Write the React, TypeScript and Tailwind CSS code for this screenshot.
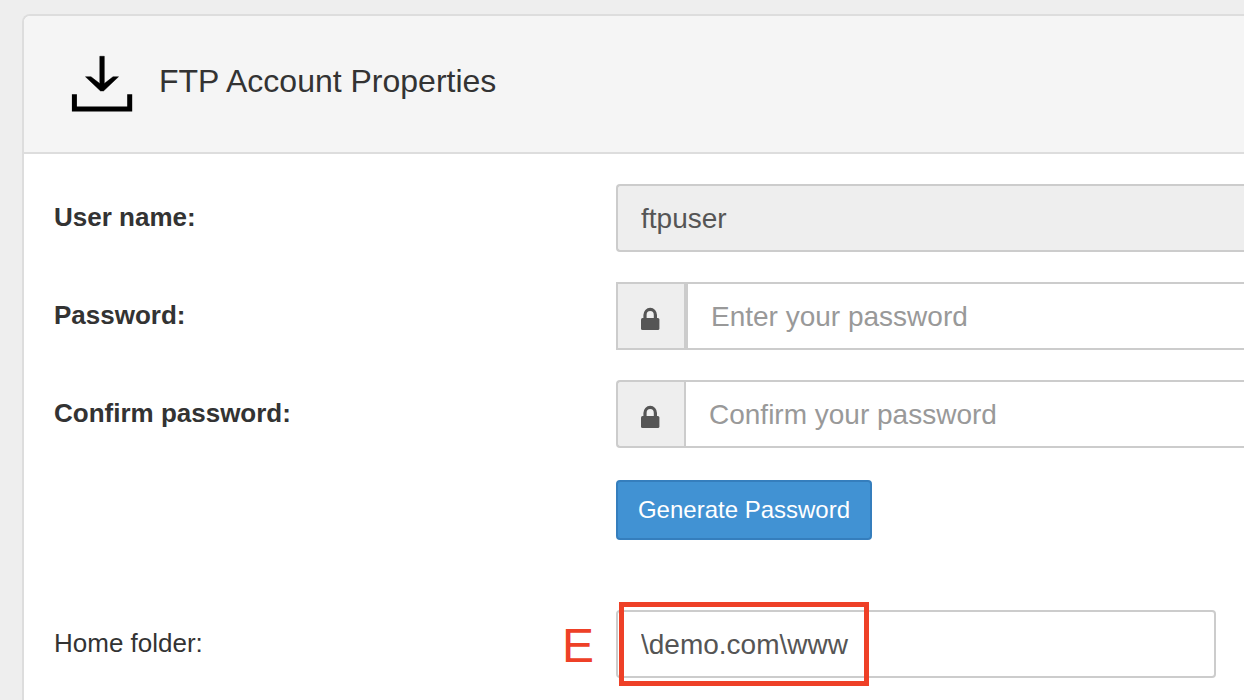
import React from "react";

const fieldClass =
  "h-[68px] w-full min-w-0 border-2 border-[#ccc] px-[23px] pt-0.5 text-[28px] text-[#555] outline-none placeholder:text-[#999] placeholder:opacity-100";

function DownloadIcon() {
  return (
    <svg width="62" height="58" viewBox="0 0 62 58" aria-hidden="true" className="shrink-0">
      <path d="M3.400 39.200v14.900h55.300V39.200" fill="none" stroke="#000" strokeWidth="5" />
      <path
        d="M28.800 1.300h4.500v27.300l8.700-6.800h5.500L32.500 35.900h-3L14.500 21.800H20l8.800 6.800z"
        fill="#000"
        stroke="#000"
        strokeWidth="0.500"
      />
    </svg>
  );
}

function LockIcon() {
  return (
    <svg width="20" height="24" viewBox="0 0 20 24" aria-hidden="true">
      <path d="M5 12V8a5.200 5.600 0 0 1 10.400 0v4" fill="none" stroke="#555" strokeWidth="3.200" />
      <rect x="1" y="11" width="18.400" height="12" rx="1.500" fill="#555" />
    </svg>
  );
}

function Row({
  label,
  htmlFor,
  bold = true,
  children,
}: {
  label: string;
  htmlFor: string;
  bold?: boolean;
  children: React.ReactNode;
}) {
  return (
    <div className="grid grid-cols-[562px_minmax(0,1fr)]">
      <label
        htmlFor={htmlFor}
        className={bold ? "pt-[15px] text-[26px] leading-9 font-bold" : "pt-[15px] text-[26px] leading-9"}
      >
        {label}
      </label>
      {children}
    </div>
  );
}

export default function App() {
  return (
    <div className="flex min-h-screen flex-col bg-[#eee] pt-3.5 pl-[22px] font-['Liberation_Sans',Arial,sans-serif] text-[#333]">
      <main className="flex grow flex-col overflow-hidden rounded-tl-lg border-t-2 border-l-2 border-[#ddd] bg-white">
        <header className="flex items-start gap-[26px] border-b-2 border-[#ddd] bg-[#f5f5f5] py-[39px] pl-[47px]">
          <DownloadIcon />
          <h1 className="pt-1 text-[32px] leading-[44px]">FTP Account Properties</h1>
        </header>
        <form className="flex flex-col pt-[30px] pb-[22px] pl-[30px]" onSubmit={(e) => e.preventDefault()}>
          <div className="flex flex-col gap-[30px]">
            <Row label="User name:" htmlFor="username">
              <input
                id="username"
                type="text"
                readOnly
                value="ftpuser"
                className={`${fieldClass} rounded-l-sm border-r-0 bg-[#eee]`}
              />
            </Row>
            <Row label="Password:" htmlFor="password">
              <div className="flex">
                <span className="flex w-[70px] shrink-0 items-center justify-center border-2 border-[#ccc] bg-[#eee] pt-1.5 pr-0.5">
                  <LockIcon />
                </span>
                <input
                  id="password"
                  type="password"
                  placeholder="Enter your password"
                  className={`${fieldClass} border-r-0 bg-white`}
                />
              </div>
            </Row>
            <Row label="Confirm password:" htmlFor="confirm">
              <div className="flex">
                <span className="flex w-[68px] shrink-0 items-center justify-center rounded-l-sm border-2 border-r-0 border-[#ccc] bg-[#eee] pt-1.5 pr-0.5">
                  <LockIcon />
                </span>
                <input
                  id="confirm"
                  type="password"
                  placeholder="Confirm your password"
                  className={`${fieldClass} border-r-0 bg-white`}
                />
              </div>
            </Row>
          </div>
          <div className="mt-8 pl-[562px]">
            <button
              type="button"
              className="h-[60px] w-64 rounded-sm border-2 border-[#357ebd] bg-[#4192d3] text-2xl whitespace-nowrap text-white"
            >
              Generate Password
            </button>
          </div>
          <div className="mt-[70px]">
            <Row label="Home folder:" htmlFor="home" bold={false}>
              <div className="relative max-w-[600px]">
                <input
                  id="home"
                  type="text"
                  defaultValue="\demo.com\www"
                  className={`${fieldClass} rounded-sm bg-white`}
                />
                <span className="pointer-events-none absolute -top-2 left-[3px] h-[84px] w-[250px] border-5 border-[#ee4027]" />
                <span className="absolute top-2 right-full mr-[22px] text-5xl leading-[56px] text-[#ee4027]">
                  E
                </span>
              </div>
            </Row>
          </div>
        </form>
      </main>
    </div>
  );
}
